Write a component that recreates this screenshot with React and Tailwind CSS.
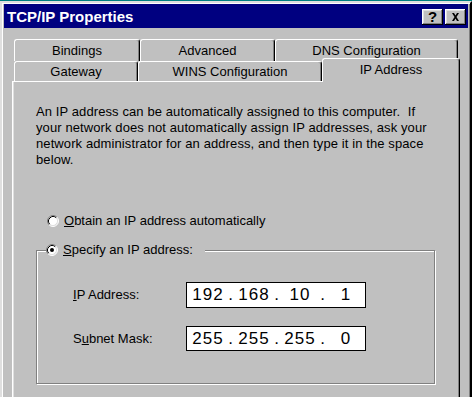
import React from "react";

function Tab({ label, className = "" }) {
  return (
    <div
      className={
        "flex h-full items-center justify-center rounded-t-[3px] border-l border-t border-r border-white border-r-black shadow-[inset_-1px_0_#808080] " +
        className
      }
    >
      {label}
    </div>
  );
}

function Radio({ checked }) {
  return (
    <svg width="12" height="12" viewBox="0 0 12 12" className="shrink-0">
      <circle cx="6" cy="6" r="5" fill="#fff" />
      <path d="M2.11 9.89 A5.5 5.5 0 0 1 9.89 2.11" fill="none" stroke="#808080" />
      <path d="M9.89 2.11 A5.5 5.5 0 0 1 2.11 9.89" fill="none" stroke="#fff" />
      <path d="M2.82 9.18 A4.5 4.5 0 0 1 9.18 2.82" fill="none" stroke="#000" />
      <path d="M9.18 2.82 A4.5 4.5 0 0 1 2.82 9.18" fill="none" stroke="#dfdfdf" />
      {checked && <circle cx="6" cy="6" r="2" fill="#000" />}
    </svg>
  );
}

function TitleButton({ children }) {
  return (
    <div className="flex h-[16px] w-[21px] items-center justify-center bg-[#c0c0c0] shadow-[inset_-1px_-1px_#000,inset_1px_1px_#fff,inset_-2px_-2px_#808080,inset_2px_2px_#dfdfdf]">
      {children}
    </div>
  );
}

function IpField({ parts }) {
  return (
    <div className="flex h-full w-[180px] items-center border border-black bg-white pl-[2px] text-[17px] tracking-[1px] text-black">
      {parts.map((p, i) => (
        <React.Fragment key={i}>
          <span className="w-[38px] text-center">{p}</span>
          {i < 3 && <span className="w-[8px] text-center">.</span>}
        </React.Fragment>
      ))}
    </div>
  );
}

export default function App() {
  return (
    <div className="h-[397px] w-[472px] overflow-hidden bg-[#008080] pt-[1px] font-['Liberation_Sans',Arial,sans-serif] text-[13px] leading-[16px] text-black">
      <div className="flex h-[420px] flex-col border-2 border-l-[#dfdfdf] border-t-[#dfdfdf] border-r-black border-b-black bg-[#c0c0c0] px-[2px] pt-[1px] shadow-[inset_1px_1px_#fff,inset_-1px_-1px_#808080]">
        {/* title bar */}
        <div className="flex h-[24px] items-center justify-between bg-[#000080] pl-[3px] pr-[2px] pt-[1px]">
          <span className="text-[15px] font-bold text-white">TCP/IP Properties</span>
          <div className="flex gap-[2px]">
            <TitleButton>
              <span className="text-[15px] font-bold leading-none">?</span>
            </TitleButton>
            <TitleButton>
              <svg width="9" height="8" viewBox="0 0 9 8">
                <path d="M1 0h2l1.5 2.5L6 0h2L5.5 4 8 8H6L4.5 5.5 3 8H1l2.5-4z" fill="#000" />
              </svg>
            </TitleButton>
          </div>
        </div>

        {/* body */}
        <div className="flex flex-1 flex-col px-[8px] pt-[11px]">
          <div className="ml-[2px] flex h-[22px] w-[444px]">
            <Tab label="Bindings" className="w-[126px]" />
            <Tab label="Advanced" className="w-[135px]" />
            <Tab label="DNS Configuration" className="w-[183px]" />
          </div>
          <div className="ml-[2px] flex h-[20px] items-end">
            <Tab label="Gateway" className="w-[124px]" />
            <Tab label="WINS Configuration" className="w-[184px]" />
            <div className="relative top-[1px] z-10 flex h-[24px] w-[138px] items-center justify-center rounded-t-[3px] border-l border-t border-r border-white border-r-black bg-[#c0c0c0] pb-[2px] shadow-[inset_-1px_0_#808080]">
              IP Address
            </div>
          </div>

          {/* panel */}
          <div className="flex-1 border-l border-t border-r border-white border-r-black pl-[23px] pt-[22px] shadow-[inset_-1px_0_#808080,inset_1px_0_#dfdfdf]">
            <p className="tracking-[0.1px]">
              An IP address can be automatically assigned to this computer.&nbsp; If
              <br />
              your network does not automatically assign IP addresses, ask your
              <br />
              network administrator for an address, and then type it in the space
              <br />
              below.
            </p>

            <div className="mt-[45px] ml-[11px] flex h-[16px] items-center gap-[5px]">
              <Radio />
              <span>
                <span className="underline">O</span>btain an IP address automatically
              </span>
            </div>

            <fieldset className="mt-[13px] w-[399px] border border-[#808080] shadow-[1px_1px_#fff,inset_1px_1px_#fff]">
              <legend className="ml-[9px] flex h-[16px] items-center gap-[5px] bg-[#c0c0c0] pr-[12px]">
                <Radio checked />
                <span>
                  <span className="underline">S</span>pecify an IP address:
                </span>
              </legend>
              <div className="pb-[32px] pl-[36px] pt-[24px]">
                <div className="flex h-[26px] items-center">
                  <span className="w-[113px]">
                    <span className="underline">I</span>P Address:
                  </span>
                  <IpField parts={["192", "168", "10", "1"]} />
                </div>
                <div className="mt-[18px] flex h-[25px] items-center">
                  <span className="w-[113px]">
                    S<span className="underline">u</span>bnet Mask:
                  </span>
                  <IpField parts={["255", "255", "255", "0"]} />
                </div>
              </div>
            </fieldset>
          </div>
        </div>
      </div>
    </div>
  );
}
